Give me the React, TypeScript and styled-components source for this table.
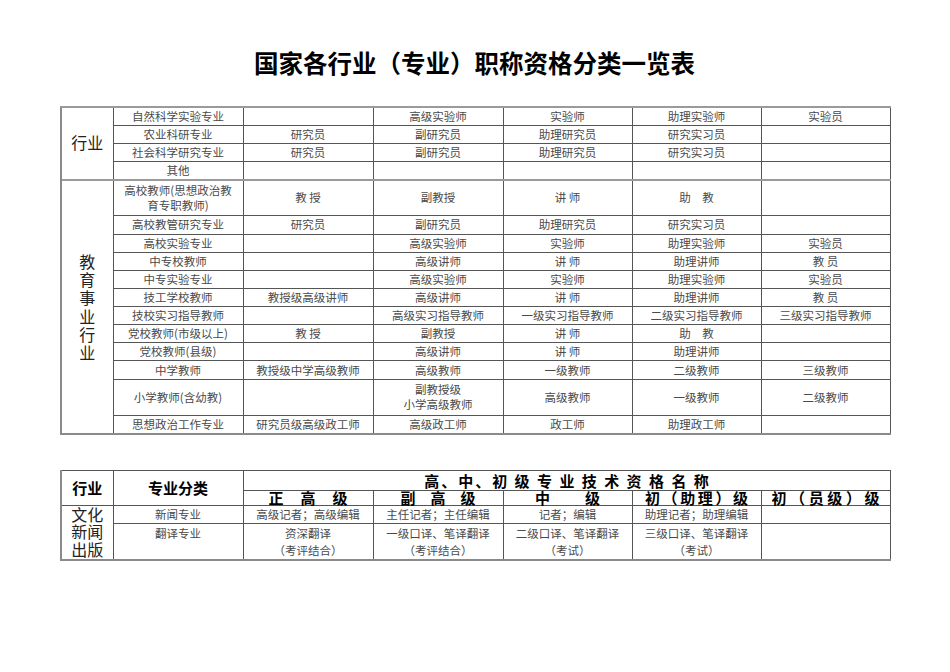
import { Fragment } from 'react';
import { createGlobalStyle, styled } from 'styled-components';

const GlobalStyle = createGlobalStyle`
  body {
    margin: 0;
    background: #fff;
  }
`;

const COLS = [52, 130, 130, 130, 129, 129, 129];

type Row = { name: React.ReactNode; cells: React.ReactNode[]; tall?: boolean };

const tradeRows: Row[] = [
  { name: '自然科学实验专业', cells: ['', '高级实验师', '实验师', '助理实验师', '实验员'] },
  { name: '农业科研专业', cells: ['研究员', '副研究员', '助理研究员', '研究实习员', ''] },
  { name: '社会科学研究专业', cells: ['研究员', '副研究员', '助理研究员', '研究实习员', ''] },
  { name: '其他', cells: ['', '', '', '', ''] },
];

const eduRows: Row[] = [
  {
    name: (
      <>
        高校教师(思想政治教
        <br />
        育专职教师)
      </>
    ),
    cells: ['教 授', '副教授', '讲 师', '助　教', ''],
    tall: true,
  },
  { name: '高校教管研究专业', cells: ['研究员', '副研究员', '助理研究员', '研究实习员', ''] },
  { name: '高校实验专业', cells: ['', '高级实验师', '实验师', '助理实验师', '实验员'] },
  { name: '中专校教师', cells: ['', '高级讲师', '讲 师', '助理讲师', '教 员'] },
  { name: '中专实验专业', cells: ['', '高级实验师', '实验师', '助理实验师', '实验员'] },
  { name: '技工学校教师', cells: ['教授级高级讲师', '高级讲师', '讲 师', '助理讲师', '教 员'] },
  {
    name: '技校实习指导教师',
    cells: ['', '高级实习指导教师', '一级实习指导教师', '二级实习指导教师', '三级实习指导教师'],
  },
  { name: '党校教师(市级以上)', cells: ['教 授', '副教授', '讲 师', '助　教', ''] },
  { name: '党校教师(县级)', cells: ['', '高级讲师', '讲 师', '助理讲师', ''] },
  { name: '中学教师', cells: ['教授级中学高级教师', '高级教师', '一级教师', '二级教师', '三级教师'] },
  {
    name: '小学教师(含幼教)',
    cells: [
      '',
      <>
        副教授级
        <br />
        小学高级教师
      </>,
      '高级教师',
      '一级教师',
      '二级教师',
    ],
    tall: true,
  },
  { name: '思想政治工作专业', cells: ['研究员级高级政工师', '高级政工师', '政工师', '助理政工师', ''] },
];

// letter gaps measured from the printed header
const levels: { text: string; gap: number }[] = [
  { text: '正高级', gap: 17 },
  { text: '副高级', gap: 15 },
  { text: '中级', gap: 35 },
  { text: '初（助理）级', gap: 2.6 },
  { text: '初（员级）级', gap: 3.6 },
];

const App = () => {
  const renderGroup = (label: React.ReactNode, rows: Row[], vertical: boolean) =>
    rows.map((row, i) => (
      <Line key={i} $h={row.tall ? 36.3 : 18.15} $first={i === 0}>
        {i === 0 && (
          <GroupCell rowSpan={rows.length}>
            {vertical ? <StackLabel>{label}</StackLabel> : <GroupLabel>{label}</GroupLabel>}
          </GroupCell>
        )}
        <Cell>{row.name}</Cell>
        {row.cells.map((c, j) => (
          <Cell key={j}>{c}</Cell>
        ))}
      </Line>
    ));

  return (
    <Page>
      <GlobalStyle />
      <Title>国家各行业（专业）职称资格分类一览表</Title>

      <Sheet>
        <colgroup>
          {COLS.map((w, i) => (
            <col key={i} style={{ width: w }} />
          ))}
        </colgroup>
        <tbody>
          {renderGroup('行业', tradeRows, false)}
          {renderGroup(
            <>
              {'教育事业行业'.split('').map((ch, i) => (
                <Fragment key={i}>
                  {ch}
                  <br />
                </Fragment>
              ))}
            </>,
            eduRows,
            true,
          )}
        </tbody>
      </Sheet>

      <SecondSheet>
        <colgroup>
          {COLS.map((w, i) => (
            <col key={i} style={{ width: w }} />
          ))}
        </colgroup>
        <tbody>
          <Line $h={20}>
            <HeadCell rowSpan={2}>行业</HeadCell>
            <HeadCell rowSpan={2}>专业分类</HeadCell>
            <HeadCell colSpan={5}>
              <Spread $gap={2}>高、中、初 级 专 业 技 术 资 格 名 称</Spread>
            </HeadCell>
          </Line>
          <Line $h={15}>
            {levels.map(l => (
              <HeadCell key={l.text}>
                <Spread $gap={l.gap}>{l.text}</Spread>
              </HeadCell>
            ))}
          </Line>
          <Line $h={18}>
            <GroupCell rowSpan={2}>
              <StackLabel $lh={17.5}>
                文化
                <br />
                新闻
                <br />
                出版
              </StackLabel>
            </GroupCell>
            <Cell>新闻专业</Cell>
            <Cell>高级记者；高级编辑</Cell>
            <Cell>主任记者；主任编辑</Cell>
            <Cell>记者；编辑</Cell>
            <Cell>助理记者；助理编辑</Cell>
            <Cell></Cell>
          </Line>
          <Line $h={36}>
            <TopCell>翻译专业</TopCell>
            <TopCell>
              资深翻译
              <br />
              （考评结合）
            </TopCell>
            <TopCell>
              一级口译、笔译翻译
              <br />
              （考评结合）
            </TopCell>
            <TopCell>
              二级口译、笔译翻译
              <br />
              （考试）
            </TopCell>
            <TopCell>
              三级口译、笔译翻译
              <br />
              （考试）
            </TopCell>
            <TopCell></TopCell>
          </Line>
        </tbody>
      </SecondSheet>
    </Page>
  );
};

export default App;

const Page = styled.div`
  width: 950px;
  height: 672px;
  box-sizing: border-box;
  padding: 48px 0 0 60px;
  font-family: 'Noto Sans CJK SC', 'Liberation Sans', sans-serif;
  color: #333;
`;

const Title = styled.h1`
  width: 829px;
  height: 30px;
  margin: 0;
  font-size: 24.5px;
  line-height: 30px;
  font-weight: 700;
  text-align: center;
  color: #000;
`;

const Sheet = styled.table`
  margin-top: 28px;
  width: 829px;
  table-layout: fixed;
  border-collapse: collapse;
  border-left: 2px solid #8a8a8a;
  border-bottom: 2px solid #8a8a8a;
`;

const SecondSheet = styled(Sheet)`
  margin-top: 35px;
`;

const Line = styled.tr<{ $h: number; $first?: boolean }>`
  height: ${p => p.$h}px;

  & > td {
    border-top: ${p => (p.$first ? '2px solid #9a9a9a' : '1px solid #555')};
  }
`;

const Cell = styled.td`
  border: 1px solid #555;
  padding: 0;
  text-align: center;
  vertical-align: middle;
  font-size: 11.5px;
  line-height: 15px;
  white-space: nowrap;
  color: #4a4a4a;
`;

const TopCell = styled(Cell)`
  vertical-align: top;
  line-height: 17px;
  padding-top: 1px;
`;

const GroupCell = styled(Cell)`
  border-left: 2px solid #8a8a8a;
`;

const GroupLabel = styled.span`
  font-size: 16px;
  color: #222;
`;

const StackLabel = styled.div<{ $lh?: number }>`
  font-size: 16px;
  line-height: ${p => p.$lh ?? 18.2}px;
  color: #222;
`;

const HeadCell = styled(Cell)`
  font-size: 15px;
  font-weight: 700;
  line-height: 13px;
  color: #000;
`;

const Spread = styled.span<{ $gap: number }>`
  letter-spacing: ${p => p.$gap}px;
  margin-right: -${p => p.$gap}px;
`;
